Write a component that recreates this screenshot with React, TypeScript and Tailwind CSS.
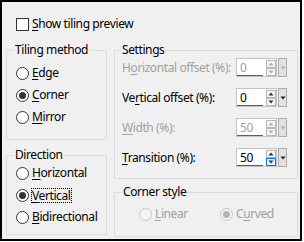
import type { ReactNode } from 'react';

const Key = ({ children }: { children: ReactNode }) => (
  <span className="underline underline-offset-[2px] decoration-1">{children}</span>
);

const Radio = ({
  checked,
  disabled,
  focus,
  children,
}: {
  checked?: boolean;
  disabled?: boolean;
  focus?: boolean;
  children: ReactNode;
}) => (
  <div className={`flex items-center h-[16px] gap-[3px] whitespace-nowrap ${disabled ? 'text-[#a0a0a0]' : 'text-black'}`}>
    <div
      className={`w-[13px] h-[13px] rounded-full border flex items-center justify-center shrink-0 ${
        disabled ? 'border-[#c8c8c8] bg-[#f4f4f4]' : 'border-[#333333] bg-white'
      }`}
    >
      {checked && (
        <div className={`w-[7px] h-[7px] rounded-full ${disabled ? 'bg-[#b4b4b4]' : 'bg-[#333333]'}`} />
      )}
    </div>
    <span className={focus ? 'outline outline-1 outline-dotted outline-black leading-[13px]' : ''}>{children}</span>
  </div>
);

const Spin = ({ value, disabled, hover }: { value: string; disabled?: boolean; hover?: boolean }) => (
  <div className="flex h-[19px]">
    <div className="flex w-[41px] h-[19px] border border-[#c4c4c4] bg-white">
      <div className="w-[27px] h-full flex flex-col pl-[3px]">
        <span className={`leading-[15px] pt-[1px] ${disabled ? 'text-[#a0a0a0]' : 'text-black'}`}>{value}</span>
        <div className="-ml-[3px] w-[26px] h-[2px] bg-[#0078d7]" />
      </div>
      <div className="flex flex-col justify-center ml-[2px]">
        <div className="w-[10px] h-[8px] border border-[#b8b8b8] bg-[#f4f4f4] flex items-center justify-center">
          <svg width="6" height="4" viewBox="0 0 6 4">
            <path d="M3 0.5 L5.5 3.5 L0.5 3.5 Z" fill={disabled ? '#b0b0b0' : '#333'} />
          </svg>
        </div>
        <div
          className={`w-[10px] h-[8px] border flex items-center justify-center ${
            hover ? 'border-[#0078d7] bg-[#e5f1fb]' : 'border-[#b8b8b8] bg-[#f4f4f4]'
          }`}
        >
          <svg width="6" height="4" viewBox="0 0 6 4">
            <path d="M0.5 0.5 L5.5 0.5 L3 3.5 Z" fill={disabled ? '#b0b0b0' : '#333'} />
          </svg>
        </div>
      </div>
    </div>
    <div className="ml-[1px] w-[9px] h-[19px] border border-[#adadad] bg-[#e1e1e1] flex items-center justify-center">
      <svg width="6" height="4" viewBox="0 0 6 4">
        <path d="M0.5 0.5 L5.5 0.5 L3 3.5 Z" fill={disabled ? '#b0b0b0' : '#222'} />
      </svg>
    </div>
  </div>
);

const SpinRow = ({
  label,
  value,
  disabled,
  hover,
}: {
  label: ReactNode;
  value: string;
  disabled?: boolean;
  hover?: boolean;
}) => (
  <div className="flex items-center h-[19px]">
    <span className={`w-[114px] whitespace-nowrap ${disabled ? 'text-[#a0a0a0]' : 'text-black'}`}>{label}</span>
    <Spin value={value} disabled={disabled} hover={hover} />
  </div>
);

export default function App() {
  return (
    <div className="w-[304px] h-[242px] bg-white">
      <div
        className="w-[302px] h-[241px] border-2 border-black bg-[#f0f0f0] text-[12px] leading-[16px] tracking-[-0.4px] text-black"
        style={{ fontFamily: '"Noto Sans", "Liberation Sans", sans-serif' }}
      >
        <div className="flex items-center h-[16px] mt-[14px] ml-[14px] gap-[3px]">
          <div className="w-[13px] h-[13px] border border-[#333333] bg-white" />
          <span>
            <Key>S</Key>how tiling preview
          </span>
        </div>

        <div className="flex mt-[11px] ml-[4px] gap-[7px]">
          <div className="flex flex-col gap-[8px] w-[101px]">
            <fieldset className="border border-[#dcdcdc] h-[97px] m-0 p-0 min-w-0">
              <legend className="ml-[7px] px-[1px] leading-[14px]">Tiling method</legend>
              <div className="flex flex-col gap-[6px] mt-[8px] ml-[9px]">
                <Radio>
                  <Key>E</Key>dge
                </Radio>
                <Radio checked>
                  <Key>C</Key>orner
                </Radio>
                <Radio>
                  <Key>M</Key>irror
                </Radio>
              </div>
            </fieldset>
            <fieldset className="border border-[#dcdcdc] h-[87px] m-0 p-0 min-w-0">
              <legend className="ml-[7px] px-[1px] leading-[14px]">Direction</legend>
              <div className="flex flex-col gap-[6px] mt-[3px] ml-[9px]">
                <Radio>
                  <Key>H</Key>orizontal
                </Radio>
                <Radio checked focus>
                  <Key>V</Key>ertical
                </Radio>
                <Radio>
                  <Key>B</Key>idirectional
                </Radio>
              </div>
            </fieldset>
          </div>

          <div className="flex flex-col gap-[6px] w-[184px]">
            <fieldset className="border border-[#dcdcdc] h-[136px] m-0 p-0 min-w-0">
              <legend className="ml-[6px] px-[1px] leading-[14px]">Settings</legend>
              <div className="flex flex-col gap-[11px] mt-[1px] ml-[7px]">
                <SpinRow
                  disabled
                  value="0"
                  label={
                    <>
                      H<Key>o</Key>rizontal offset (%):
                    </>
                  }
                />
                <SpinRow
                  value="0"
                  label={
                    <>
                      Ve<Key>r</Key>tical offset (%):
                    </>
                  }
                />
                <SpinRow
                  disabled
                  value="50"
                  label={
                    <>
                      <Key>W</Key>idth (%):
                    </>
                  }
                />
                <SpinRow
                  hover
                  value="50"
                  label={
                    <>
                      <Key>T</Key>ransition (%):
                    </>
                  }
                />
              </div>
            </fieldset>
            <fieldset className="border border-[#dcdcdc] h-[52px] m-0 p-0 min-w-0">
              <legend className="ml-[7px] px-[1px] leading-[14px]">Corner style</legend>
              <div className="flex mt-[7px] ml-[24px]">
                <div className="w-[81px]">
                  <Radio disabled>
                    <Key>L</Key>inear
                  </Radio>
                </div>
                <Radio disabled checked>
                  C<Key>u</Key>rved
                </Radio>
              </div>
            </fieldset>
          </div>
        </div>
      </div>
    </div>
  );
}
